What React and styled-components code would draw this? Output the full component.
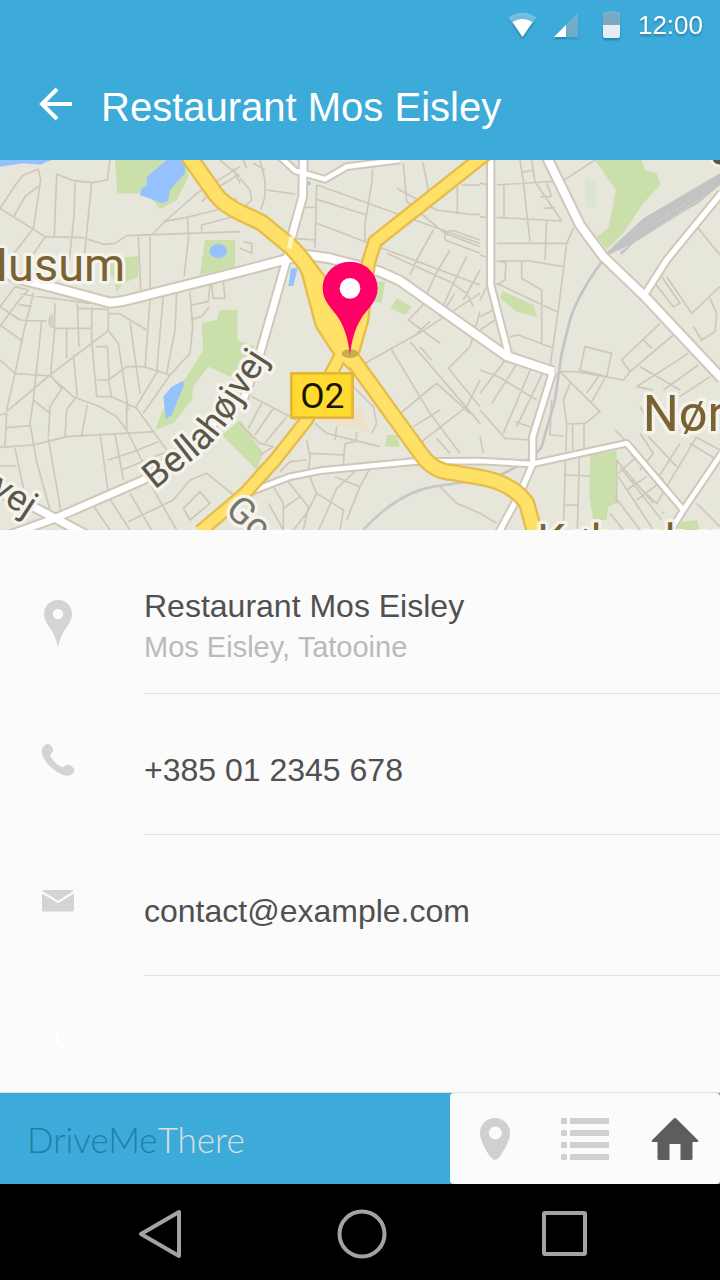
import React from "react";
import styled, { createGlobalStyle } from "styled-components";

const GlobalStyle = createGlobalStyle`
  *, *::before, *::after { box-sizing: border-box; }
  body {
    margin: 0;
    background: #fbfbfb;
    font-family: "Liberation Sans", Arial, sans-serif;
  }
`;

const Screen = styled.div`
  display: flex;
  flex-direction: column;
  min-height: 100vh;
  background: #fbfbfb;
`;

const Header = styled.header`
  background: #3cabd9;
  color: #fff;
`;

const StatusBar = styled.div`
  display: flex;
  align-items: center;
  justify-content: flex-end;
  gap: 16px;
  height: 50px;
  padding-right: 17px;
  filter: drop-shadow(0 2px 1px rgba(0, 50, 80, 0.35));

  svg { display: block; }
`;

const Clock = styled.time`
  font-size: 26px;
  line-height: 32px;
`;

const Toolbar = styled.div`
  display: flex;
  align-items: center;
  gap: 21px;
  height: 110px;
  padding: 0 32px;
`;

const BackButton = styled.button`
  width: 48px;
  height: 48px;
  padding: 0;
  border: 0;
  background: none;
  color: inherit;
  cursor: pointer;

  svg { display: block; }
`;

const Title = styled.h1`
  margin: 0;
  padding-top: 4px;
  font-size: 40px;
  font-weight: 400;
  line-height: 48px;
`;

const MapFigure = styled.figure`
  margin: 0;

  svg { display: block; width: 100%; height: auto; }
`;

const Details = styled.ul`
  flex: 1;
  margin: 0;
  padding: 23px 0 0;
  list-style: none;
`;

const DetailRow = styled.li`
  display: flex;
  min-height: ${(p) => (p.$last ? 116 : 141)}px;
`;

const DetailIcon = styled.div`
  display: flex;
  align-items: center;
  justify-content: center;
  width: 116px;
  margin-right: 28px;
  padding-bottom: ${(p) => (p.$twoLine ? 0 : 10)}px;
  color: #d4d4d4;
`;

const DetailBody = styled.div`
  display: flex;
  flex: 1;
  flex-direction: column;
  justify-content: center;
  padding-top: ${(p) => (p.$twoLine ? 6 : 12)}px;
  border-bottom: 1px solid #e2e2e2;
`;

const Primary = styled.a`
  color: #505050;
  font-size: 32px;
  line-height: 42px;
  text-decoration: none;
`;

const Secondary = styled.span`
  color: #bababa;
  font-size: 29px;
  line-height: 40px;
`;

const BottomBar = styled.footer`
  display: grid;
  grid-template-columns: 5fr 3fr;
  height: 92px;
  border-top: 1px solid #e0e3e4;
  background: #3cabd9;
`;

const Brand = styled.a`
  display: flex;
  align-items: center;
  padding-left: 27px;
  color: #dedede;
  font-family: Lato, "Liberation Sans", sans-serif;
  font-size: 35px;
  font-weight: 300;
  text-decoration: none;
`;

const BrandLead = styled.span`
  color: #227ea3;
`;

const Tabs = styled.nav`
  display: grid;
  grid-template-columns: repeat(3, 1fr);
  border-radius: 4px;
  background: #fbfbfb;
`;

const Tab = styled.a`
  display: flex;
  align-items: center;
  justify-content: center;
  color: ${(p) => (p.$active ? "#5d5d5d" : "#d0d0d0")};
`;

const SystemNav = styled.nav`
  display: grid;
  grid-template-columns: repeat(3, 1fr);
  height: 96px;
  padding: 0 54px 0 57px;
  background: #000;
`;

const SystemButton = styled.button`
  display: flex;
  align-items: center;
  justify-content: center;
  padding: 4px 0 0;
  border: 0;
  background: none;
  color: #a3a3a3;
  cursor: pointer;
`;

const WifiIcon = () => (
  <svg width="30" height="28" viewBox="0 0 30 28" aria-hidden="true">
    <path d="M0.5 6.5 Q14.500 -3 28.500 6.500 L14.500 26Z" fill="#fff" opacity=".3" />
    <path d="M4.500 11 Q14.500 5 24.500 11 L14.500 26Z" fill="#fff" />
  </svg>
);

const SignalIcon = () => (
  <svg width="32" height="28" viewBox="0 0 32 28" aria-hidden="true">
    <path d="M0 26 24 2V26Z" fill="#c8c8c8" opacity=".4" />
    <path d="M0 26 12 14V26Z" fill="#fff" />
  </svg>
);

const BatteryIcon = () => (
  <svg width="20" height="30" viewBox="0 0 20 30" aria-hidden="true">
    <path d="M1 4q0-2 2-2h3V1h7v1h3q2 0 2 2v11H1Z" fill="#c0c0c0" opacity=".48" />
    <path d="M1 15h17v11q0 2-2 2H3q-2 0-2-2Z" fill="#e6edf0" />
  </svg>
);

const ArrowIcon = () => (
  <svg width="48" height="48" viewBox="0 0 48 48" fill="none" stroke="currentColor" strokeWidth="4" aria-hidden="true">
    <path d="M25 8 10 23 25 38M11 23H40" />
  </svg>
);

const PinIcon = () => (
  <svg width="30" height="48" viewBox="0 0 30 48" aria-hidden="true">
    <path
      fill="currentColor"
      fillRule="evenodd"
      d="M15 0C7 0 1 6 1 14C1 21 5 25 9 31C12 36 14 42 15 48C16 42 18 36 21 31C25 25 29 21 29 14C29 6 23 0 15 0ZM15 8.800a5.200 5.200 0 1 1 0 10.400a5.200 5.200 0 0 1 0-10.400Z"
    />
  </svg>
);

const PhoneIcon = () => (
  <svg width="34" height="34" viewBox="0 0 34 34" aria-hidden="true">
    <path
      fill="currentColor"
      d="M4 2C6 .5 8 .6 9.500 2L11 4C12.500 6 12.300 8 11 9.500C9.500 11 9 11.500 9.500 13C11 17 16 22 21 24C22.300 24.500 23 24 24 23C26 21.300 28 21.500 29.500 22.500L32 24.500C34 26 33.800 28.500 32 30.500C29.500 33 25.500 33.500 21 31.500C11.500 27.500 3 18.500 .800 10C0 6.500 1.500 4 4 2Z"
    />
  </svg>
);

const MailIcon = () => (
  <svg width="32" height="22" viewBox="0 0 32 22" fill="currentColor" aria-hidden="true">
    <path d="M1 0H31L31.500 1L16 10.800L.500 1Z" />
    <path d="M0 3.600 16 13.300 32 3.600V20q0 1.500-1.500 1.500H1.500Q0 21.500 0 20Z" />
  </svg>
);

const HoursIcon = () => (
  <svg width="32" height="48" viewBox="0 0 32 48" fill="none" stroke="#fff" strokeWidth="3" aria-hidden="true">
    <path d="M15.500 20V32L23 36.500" />
  </svg>
);

const PlacesIcon = () => (
  <svg width="30" height="42" viewBox="0 0 30 42" aria-hidden="true">
    <path
      fill="currentColor"
      fillRule="evenodd"
      d="M15 0C6.500 0 0 6.500 0 15C0 22 5.500 32 10.500 39Q15 45 19.500 39C24.500 32 30 22 30 15C30 6.500 23.500 0 15 0ZM15.300 8.500a6.500 6.500 0 1 1 0 13a6.500 6.500 0 0 1 0-13Z"
    />
  </svg>
);

const ListIcon = () => (
  <svg width="48" height="42" viewBox="0 0 48 42" fill="currentColor" aria-hidden="true">
    {[0, 12, 24, 36].map((y) => (
      <React.Fragment key={y}>
        <rect y={y} width="6" height="6" rx="1" />
        <rect x="9" y={y} width="39" height="6" />
      </React.Fragment>
    ))}
  </svg>
);

const HomeIcon = () => (
  <svg width="48" height="42" viewBox="0 0 48 42" aria-hidden="true">
    <path
      fill="currentColor"
      d="M22.500 .800Q24 -.700 25.500 .800L47 22.300Q47.800 24 46.500 24H41.500V40.500Q41.500 42 40 42H29.500V26H18.500V42H8Q6.500 42 6.500 40.500V24H1.500Q.200 24 1 22.300Z"
    />
  </svg>
);

/* Map drawing: three 720-unit wide tiles side by side. */
const TILE_WEST = `
  M0 145 50 70 70 45 115 28 122 60 100 205 35 290M42 168 75 110 115 78
  M0 145 135 230 250 233 310 253 345 250 380 227 720 215M330 0 322 60 275 68 220 62 170 42 163 230
  M225 68 222 170 208 300M275 68 252 300M135 230 95 290M720 20 640 70 590 100 500 180 455 225
  M490 185 560 172 650 150 710 115M562 172 566 230 552 350M605 215 605 195 720 165
  M415 230 422 390M450 230 450 390M660 0 720 50M605 125 640 90 715 45
  M0 440 45 380 85 390 50 430 0 500M100 400 70 520 45 640 20 750M60 402 270 430
  M0 440 60 480 140 483M55 433 95 440M0 495 70 545M165 430 163 505 275 505M232 430 237 560
  M235 445 325 448M275 440 275 540 290 710M200 508 200 595M125 485 100 720
  M165 500 152 640M325 450 325 512 150 645 20 755M325 460 360 462 440 510
  M325 512 355 550 385 750M390 485 420 700M450 415 435 625M490 405 470 635
  M530 400 525 510 500 640M570 395 578 500 570 580 510 645 430 760
  M287 560 322 560 328 660 290 660M290 710 335 710 325 660 380 620 430 620 510 645
  M0 600 45 640 150 648 220 710 300 740 350 770 380 810 440 930M150 645 185 685 150 740 145 830
  M220 583 232 710M185 685 170 710M225 715 200 750 195 830M262 735 245 825
  M105 670 100 720 150 760M335 710 410 745 500 870M475 630 405 745M380 715 380 810
  M0 765 20 760 15 860M100 720 90 790 110 905 150 1050M20 803 90 797M0 862 100 855 200 830 465 815
  M145 835 182 1050M45 865 80 1030M0 918 50 918M300 820 325 1000M345 822 370 960
  M325 900 400 875 475 845M365 930 500 875M275 1030 330 1110M325 1010 390 1110M390 1000 455 1110
  M455 980 530 1110M385 1085 520 1020 570 960 620 940 720 1020M550 1045 600 995 630 1030 570 1080Z
  M575 435 625 425 630 370M575 478 605 470 628 440M635 375 640 415 675 415 670 365M600 50 660 100M700 25 720 70`;

const TILE_CENTER = `
  M0 55 30 90 35 120 0 155M60 0 75 60 75 110 62 150M80 90 165 102M40 10 75 30M10 0 20 25
  M230 75 225 265M232 75 690 240 720 250M230 118 380 165M190 142 225 142M230 190 375 245 720 375
  M398 28 395 70 375 190 375 245M490 10 500 125M548 5 565 90M470 85 590 150 690 163 720 163
  M652 80 652 163M665 75 720 75M500 125 615 220 720 260M615 240Q610 210 640 212L720 240M615 240 720 280
  M580 210 530 300 510 345M440 280 630 365 680 400 700 440M630 270 585 345 545 440M680 290 640 370 600 460
  M720 330 670 420M375 610 545 515 720 400M545 440 505 480 600 550M455 570 570 760 660 880
  M510 545 600 650 720 790M540 560 575 600M570 485 530 520M645 400 600 470M720 455 690 560 625 625 720 740
  M475 765 590 670M520 800 600 750M550 700 590 670 690 760M545 845 680 740 720 660M590 835 630 880
  M375 620 480 760 550 850M340 680 400 740 410 790 395 820M225 790 260 820 420 860M290 800 285 840
  M35 710 170 780M65 730 25 805M100 745 45 825M140 770 75 850M0 790 60 850 100 860 60 885
  M200 840 210 890 205 935M315 850 310 910M210 880 310 885M350 815 348 845 315 850
  M0 265 35 280 35 250 10 245M100 980 130 1030 130 1110M85 1030 130 1110M145 965 205 1040 190 1110
  M205 940 230 1000 310 1050 300 1110M230 1000 200 1060 160 1110M180 1010 130 1045M285 950 360 980 320 1080
  M350 930 290 985 250 1080 235 1110M390 925 360 980M120 935 150 905 200 900M600 980 650 1030 720 1060
  M160 235 225 240`;

const TILE_EAST = `
  M50 75 250 62 345 0M120 0 130 65 150 245M155 0 165 65 245 183M50 172 245 183M50 250 260 250 280 205
  M72 75 72 170M125 38 160 30M180 110 215 110M190 145 225 142M200 70 215 110M200 180 195 300
  M50 303 150 303 248 320M260 250 235 450 210 620M50 370 230 455M125 305 125 355 185 390 185 555
  M50 303 78 308 75 360 50 375M90 530 115 525 220 565M0 70 35 75M0 170 30 175M0 285 32 295M0 420 20 380
  M0 470 40 450M0 510 45 480M0 630 55 650 170 720M80 595 0 700M115 605 35 730M155 620 70 820
  M190 635 110 800M0 750 75 835 150 840M105 785 150 800M0 830 10 880
  M545 350 600 430 580 440 525 370M560 350 635 460 720 380M655 205 720 285M690 415 710 460 705 515 665 540 640 500
  M540 490 425 600 450 635 430 660 290 635 240 635 360 755 315 790 260 792 250 1110M490 540 515 565
  M580 525 450 635M625 580 470 680M655 615 550 690M690 650 600 710M480 620 600 690M470 680 520 690
  M315 560 395 580 380 650 300 630ZM355 650 320 700M375 655 335 725M270 670 250 720 260 790
  M278 795 278 870M312 795 312 865M215 720 210 825 250 828M298 890 292 1110M250 945 330 948M250 1035 295 1035
  M405 810 440 845 550 960M480 820 520 880 480 930M505 830 590 920M650 830 530 1030 455 960
  M600 850 540 945M630 850 720 905M645 830 720 870M410 900 520 1030M420 920 545 1080M415 950 520 1110
  M405 1010 480 1110M390 1060 430 1110M415 940 480 880M440 990 500 950M470 1020 550 960M650 1030 720 1100
  M480 740 520 800M0 1060 50 1090M545 1055 552 1060M410 900 410 1030`;

const WHITE_ROADS = [
  { d: "M0 330 50 355 160 382 330 428 365 424 720 335 870 295 920 285 990 295 1140 335 1200 362 1440 532 1520 588 1660 635", w: 24 },
  { d: "M910-10 908 110 875 230 860 300 780 580 730 720 430 960 165 1075 0 1135", w: 20 },
  { d: "M840-10 885 32 975 58 1040 20 1200 0", w: 14 },
  { d: "M0 1000 100 1040 165 1075 260 1125", w: 22 },
  { d: "M740 1000 870 950 960 932 1240 905 1440 903 1595 912 1880 850 2050 1050 2010 1115M2050 1050 2165 880", w: 14 },
  { d: "M1472-10 1472 375 1526 585", w: 16 },
  { d: "M1640-10 1740 195 1810 290 1935 410 2165 655", w: 24 },
  { d: "M1935 402 2000 300 2165 98", w: 16 },
  { d: "M1658 635 1598 830 1598 912 1560 1000 1495 1120", w: 16 },
];

const YELLOW_ROADS = [
  { d: "M560-20 645 100Q670 135 730 162L785 188 870 258Q925 310 945 370L990 500 1040 590", w: 40 },
  { d: "M1460-20 1125 245 1105 310 1085 480 1055 585", w: 32 },
  { d: "M1045 580 1265 885Q1300 935 1360 938L1440 952Q1540 970 1580 1030L1605 1120", w: 38 },
  { d: "M1020 590 920 780 825 900 735 1000 600 1115", w: 30 },
];

const MapDrawing = () => (
  <svg
    viewBox="0 0 2160 1110"
    role="img"
    aria-label="Street map with a pin on Restaurant Mos Eisley"
    fontFamily="Roboto, 'Liberation Sans', sans-serif"
    fill="none"
    strokeLinejoin="round"
  >
    <rect width="2160" height="1110" fill="#e7e6db" />
    <g fill="#cbdfab">
      <path d="M345 0H560L565 50 530 120 480 147 440 100H352Z" />
      <path d="M615 240H705V320L600 345Z" />
      <path d="M300 300 415 288V350L370 370 350 395 340 350 305 350Z" />
      <path d="M660 450H712V540L765 560 720 620 690 650 625 620 580 680 575 720 520 790 465 810 500 720 560 650 610 570 605 490 650 480Z" />
      <path d="M665 825 720 780 790 880 770 930 720 880Z" />
      <path d="M1125 365H1155L1145 430 1120 425ZM1190 415 1235 440 1215 465 1172 445ZM1160 825H1190L1200 860H1155Z" />
      <path d="M1785 0H1925L1935 30 1970 40 1982 72 1930 130 1870 220 1820 268 1790 230 1825 205 1848 90Z" />
      <path d="M1508 393 1600 435 1612 472 1550 455 1500 415Z" />
      <path d="M1770 885 1850 872 1850 1030 1825 1040 1820 1080 1780 1080 1768 1010Z" />
      <path d="M2030 1110 2045 1085 2090 1080 2100 1110Z" />
    </g>
    <path d="M955 785 1080 740 1110 815 1060 805Z" fill="#eee0cb" />
    <path d="M1755 50 1790 60 1790 145 1755 140Z" fill="#dbe5d1" />
    <path d="M160 462A20 22 0 0 0 160 505Z" fill="#d2d1bd" />
    <g fill="#95c2ff">
      <path d="M0 0H155L120 14 70 10 0 20Z" />
      <path d="M500 0H555V40L510 90 505 122 485 129 420 105 425 85 440 75 440 50Z" />
      <ellipse cx="655" cy="273" rx="26" ry="21" />
      <path d="M490 710 515 680 548 663 553 672 515 765 498 777Z" />
      <path d="M873 325H893L880 378H865ZM922 65h10v10h-10Z" />
    </g>
    <g stroke="#d0c6b9" strokeWidth="5">
      <path d={TILE_WEST} />
      <path d={TILE_CENTER} transform="translate(720)" />
      <path d={TILE_EAST} transform="translate(1440)" />
    </g>
    <g stroke="#c3c3c5" strokeWidth="8">
      <path d="M1090 1110Q1190 1000 1300 980L1440 960 1500 945" stroke="#c8c8c8" />
      <path d="M1500 945Q1600 900 1625 860L1665 720 1685 580 1710 480Q1730 410 1805 305" />
    </g>
    <path d="M1822 275 1865 235 1930 175 2160 40V75L2095 130 2060 150 1900 250 1865 285 1860 275 1890 255 1825 285Z" fill="#c3c3c3" />
    <path d="M1940 225 2110 110M1970 185 2060 130" stroke="#d4d3cf" strokeWidth="3" strokeDasharray="22 6" />
    {WHITE_ROADS.map((r) => <path key={r.d} d={r.d} stroke="#d0c7bb" strokeWidth={r.w + 12} />)}
    {WHITE_ROADS.map((r) => <path key={r.d} d={r.d} stroke="#fff" strokeWidth={r.w} />)}
    {YELLOW_ROADS.map((r) => <path key={r.d} d={r.d} stroke="#e5bd4d" strokeWidth={r.w + 14} />)}
    <path d="M895 300 925 285 975 350 1020 450 1070 540 1050 630 1000 580 948 500Z" fill="#ffe168" stroke="#e5bd4d" strokeWidth="7" />
    {YELLOW_ROADS.map((r) => <path key={r.d} d={r.d} stroke="#ffe168" strokeWidth={r.w} />)}
    <path d="M875 230 868 265" stroke="#fff3c0" strokeWidth="14" />

    <defs>
      <path id="bellahojvej" d="M464 990 568 908Q645 850 692 775L825 570" />
    </defs>
    <g stroke="#f4f3ee" strokeWidth="20" paintOrder="stroke" strokeLinecap="round">
      <g fill="#7a6231">
        <text x="376" y="362" fontSize="141" textAnchor="end">Husum</text>
        <text x="1928" y="814" fontSize="152">Nørrebro</text>
        <text x="1612" y="1188" fontSize="135">København</text>
      </g>
      <g fill="#5c5747" fontSize="110">
        <text><textPath href="#bellahojvej">Bellahøjvej</textPath></text>
        <text transform="translate(-34 1000) rotate(33)">vej</text>
        <text transform="translate(672 1056) rotate(42)" fill="#77756c">Godt</text>
      </g>
    </g>
    <path d="M2138 0H2160V14L2145 10Z" fill="#5c5747" stroke="#f4f3ee" strokeWidth="16" paintOrder="stroke" />

    <rect x="874" y="640" width="184" height="133" fill="#ffdb32" stroke="#e3b737" strokeWidth="8" />
    <text x="967" y="744" fontSize="106" textAnchor="middle" fill="#191400">O2</text>

    <ellipse cx="1050" cy="581" rx="25" ry="13" fill="#c9ab4d" />
    <path
      fill="#ff0066"
      fillRule="evenodd"
      d="M1050 305C1004 305 968 341 968 385C968 425 998 447 1016 475C1037 508 1045 545 1050 585C1055 545 1063 508 1084 475C1102 447 1133 425 1133 385C1133 341 1096 305 1050 305Z"
    />
    <circle cx="1050" cy="385" r="31" fill="#fff" />
  </svg>
);

export default function App() {
  return (
    <Screen>
      <GlobalStyle />
      <Header>
        <StatusBar>
          <WifiIcon />
          <SignalIcon />
          <BatteryIcon />
          <Clock>12:00</Clock>
        </StatusBar>
        <Toolbar>
          <BackButton aria-label="Back"><ArrowIcon /></BackButton>
          <Title>Restaurant Mos Eisley</Title>
        </Toolbar>
      </Header>

      <MapFigure><MapDrawing /></MapFigure>

      <Details>
        <DetailRow>
          <DetailIcon $twoLine><PinIcon /></DetailIcon>
          <DetailBody $twoLine>
            <Primary as="span">Restaurant Mos Eisley</Primary>
            <Secondary>Mos Eisley, Tatooine</Secondary>
          </DetailBody>
        </DetailRow>
        <DetailRow>
          <DetailIcon><PhoneIcon /></DetailIcon>
          <DetailBody><Primary href="tel:+385012345678">+385 01 2345 678</Primary></DetailBody>
        </DetailRow>
        <DetailRow>
          <DetailIcon><MailIcon /></DetailIcon>
          <DetailBody><Primary href="mailto:contact@example.com">contact@example.com</Primary></DetailBody>
        </DetailRow>
        <DetailRow $last>
          <DetailIcon $twoLine><HoursIcon /></DetailIcon>
        </DetailRow>
      </Details>

      <BottomBar>
        <Brand href="#start"><BrandLead>DriveMe</BrandLead>There</Brand>
        <Tabs aria-label="Sections">
          <Tab href="#places" aria-label="Places"><PlacesIcon /></Tab>
          <Tab href="#list" aria-label="List"><ListIcon /></Tab>
          <Tab href="#home" aria-label="Home" $active><HomeIcon /></Tab>
        </Tabs>
      </BottomBar>

      <SystemNav aria-label="System">
        <SystemButton aria-label="System back">
          <svg width="50" height="50" viewBox="0 0 50 50" fill="none" stroke="currentColor" strokeWidth="4" strokeLinejoin="round" aria-hidden="true">
            <path d="M7 25 45 3V47Z" />
          </svg>
        </SystemButton>
        <SystemButton aria-label="System home">
          <svg width="50" height="50" viewBox="0 0 50 50" fill="none" stroke="currentColor" strokeWidth="4" aria-hidden="true">
            <circle cx="25" cy="25" r="22.500" />
          </svg>
        </SystemButton>
        <SystemButton aria-label="Recent apps">
          <svg width="50" height="50" viewBox="0 0 50 50" fill="none" stroke="currentColor" strokeWidth="4" strokeLinejoin="round" aria-hidden="true">
            <rect x="4" y="4" width="41" height="41" rx="1" />
          </svg>
        </SystemButton>
      </SystemNav>
    </Screen>
  );
}
